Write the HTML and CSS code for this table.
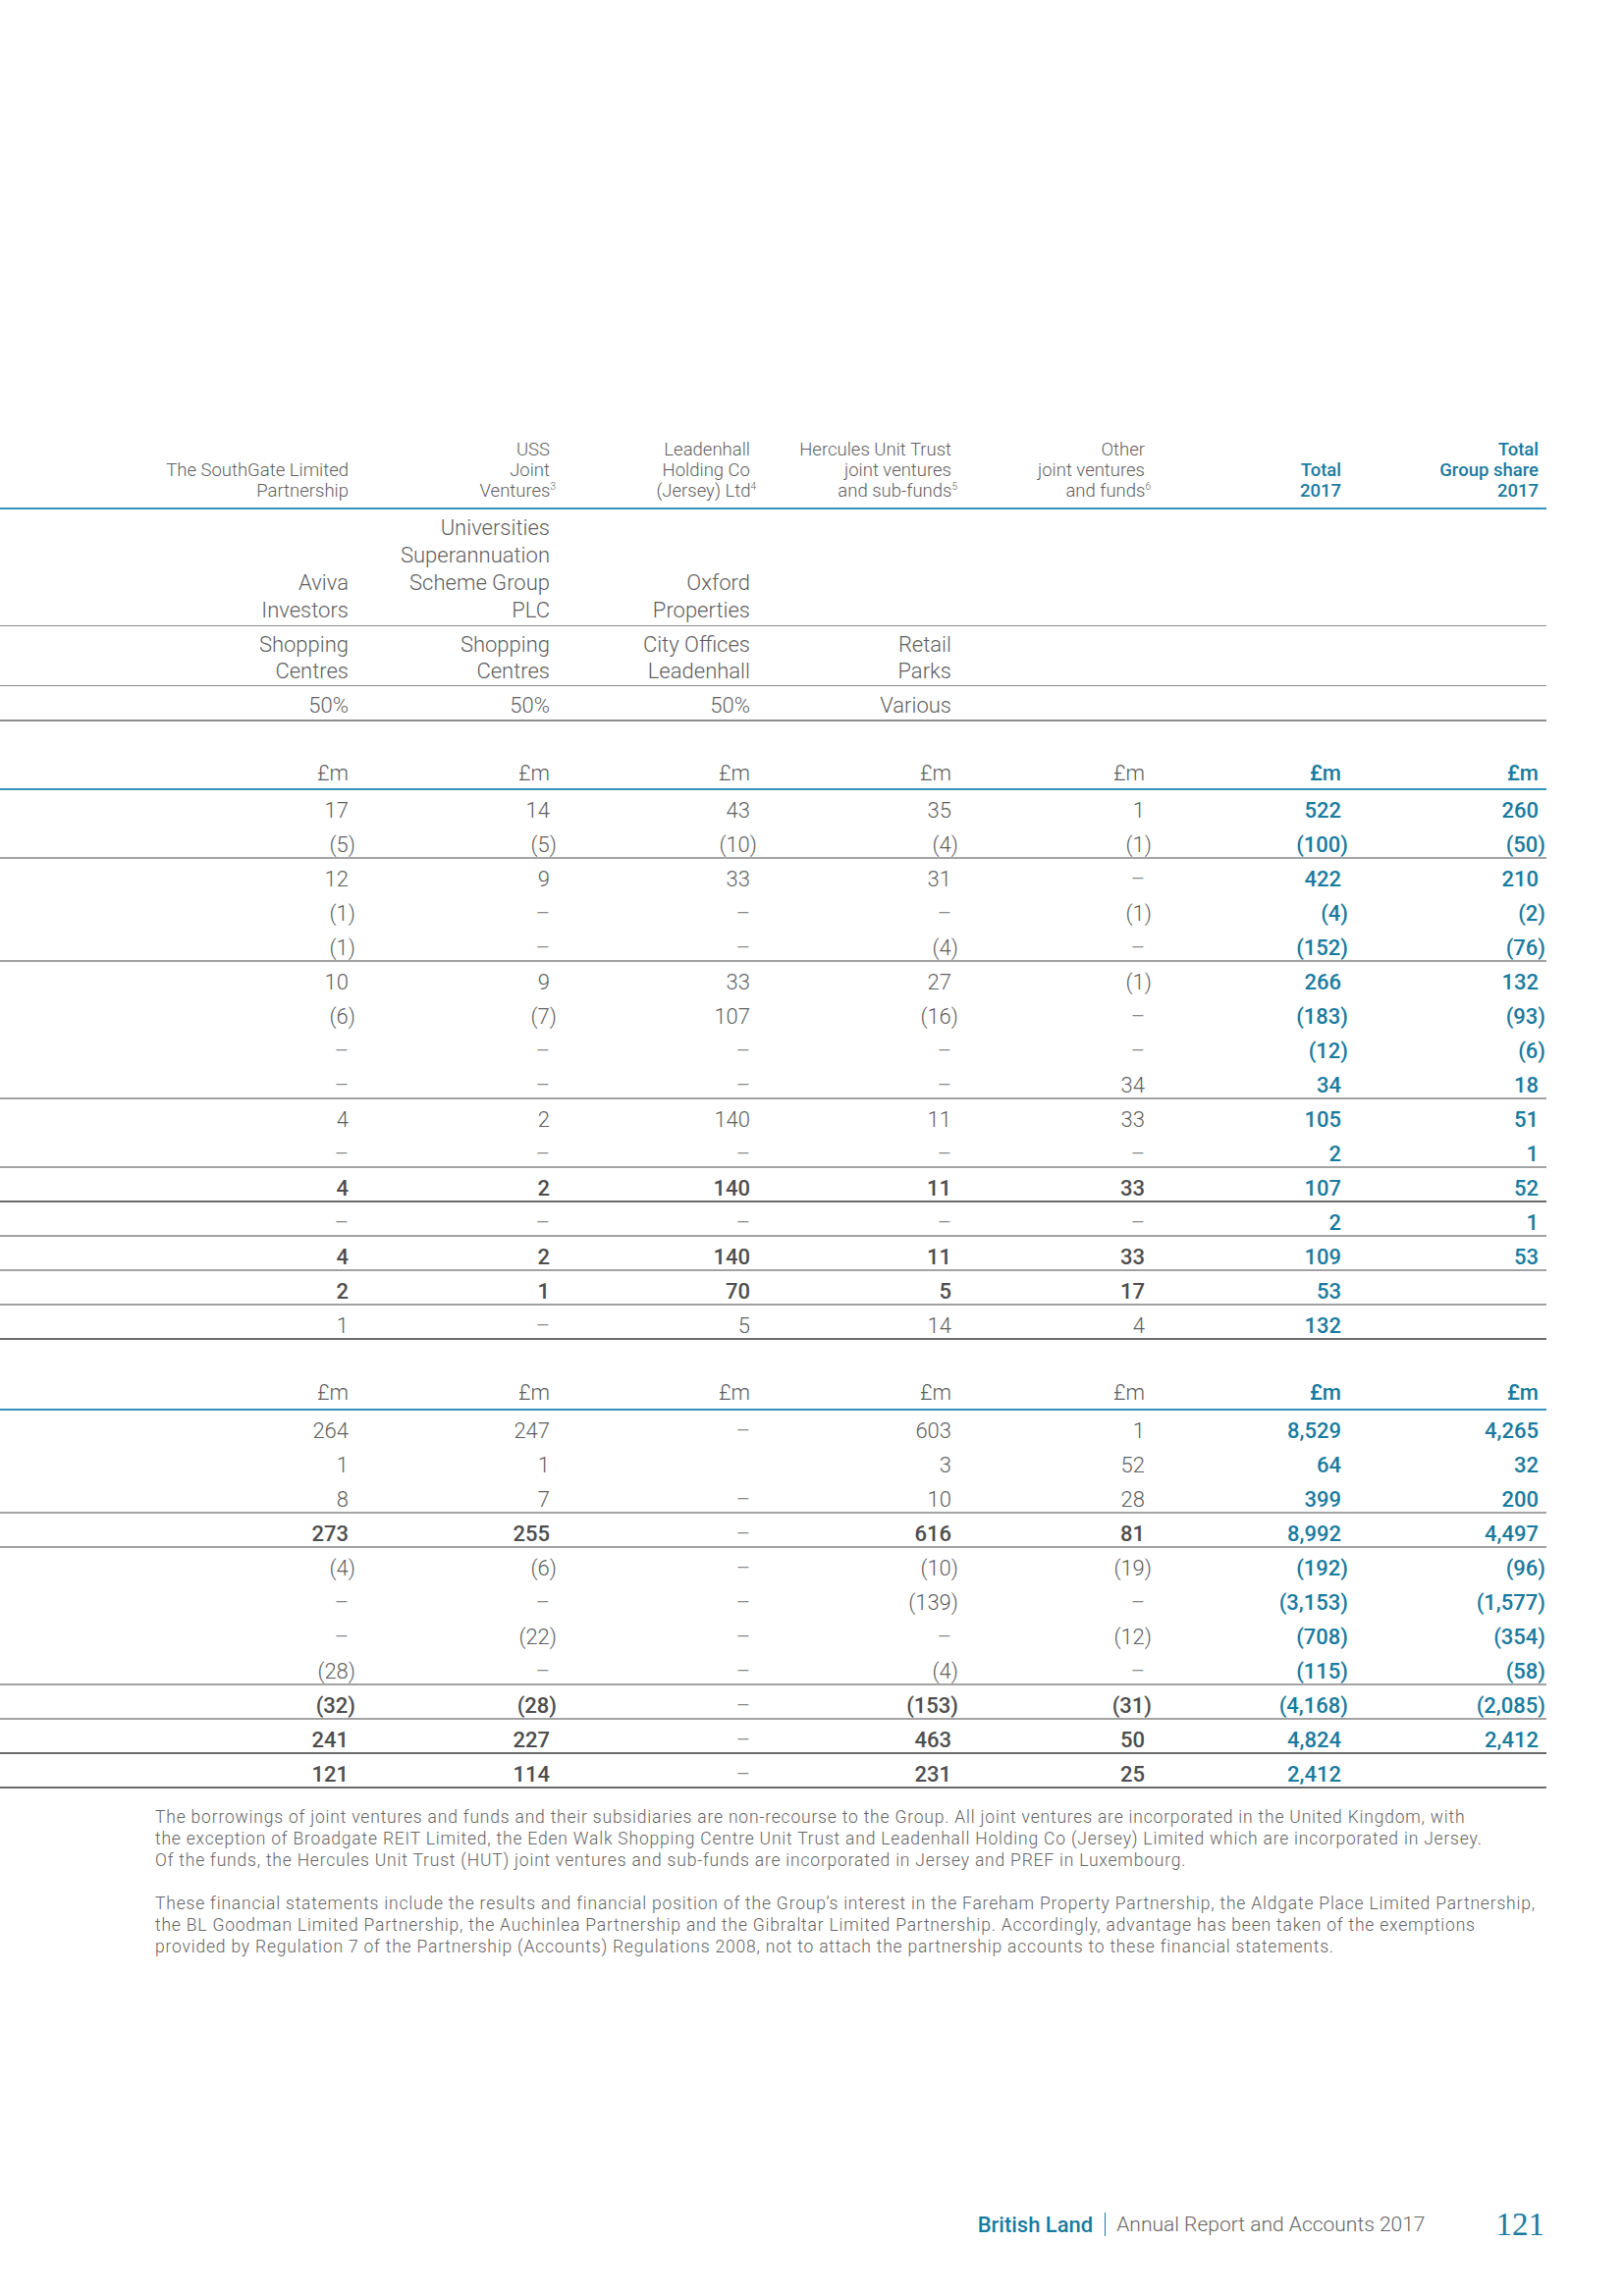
FILE: index.html
```html
<!DOCTYPE html>
<html lang="en">
<head>
<meta charset="utf-8">
<title>British Land – Annual Report and Accounts 2017 – page 121</title>
<link rel="stylesheet" href="styles.css">
</head>
<body>
<div class="page">
  <div class="table">
    <div class="row head">
      <div class="c"></div>
      <div class="c">The SouthGate Limited<br>Partnership</div>
      <div class="c">USS<br>Joint<br>Ventures<span class="sup">3</span></div>
      <div class="c">Leadenhall<br>Holding Co<br>(Jersey) Ltd<span class="sup">4</span></div>
      <div class="c">Hercules Unit Trust<br>joint ventures<br>and sub-funds<span class="sup">5</span></div>
      <div class="c">Other<br>joint ventures<br>and funds<span class="sup">6</span></div>
      <div class="c t">Total<br>2017</div>
      <div class="c t">Total<br>Group share<br>2017</div>
    </div>
    <div class="row partner">
      <div class="c"></div>
      <div class="c">Aviva<br>Investors</div>
      <div class="c">Universities<br>Superannuation<br>Scheme Group<br>PLC</div>
      <div class="c">Oxford<br>Properties</div>
      <div class="c"></div><div class="c"></div><div class="c"></div><div class="c"></div>
    </div>
    <div class="row sector">
      <div class="c"></div>
      <div class="c">Shopping<br>Centres</div>
      <div class="c">Shopping<br>Centres</div>
      <div class="c">City Offices<br>Leadenhall</div>
      <div class="c">Retail<br>Parks</div>
      <div class="c"></div><div class="c"></div><div class="c"></div>
    </div>
    <div class="row pct">
      <div class="c"></div>
      <div class="c">50%</div>
      <div class="c">50%</div>
      <div class="c">50%</div>
      <div class="c">Various</div>
      <div class="c"></div><div class="c"></div><div class="c"></div>
    </div>

    <div class="row unit first">
      <div class="c"></div>
      <div class="c">£m</div><div class="c">£m</div><div class="c">£m</div><div class="c">£m</div><div class="c">£m</div>
      <div class="c t">£m</div><div class="c t">£m</div>
    </div>
    <div class="row"><div class="c"></div><div class="c">17</div><div class="c">14</div><div class="c">43</div><div class="c">35</div><div class="c">1</div><div class="c t">522</div><div class="c t">260</div></div>
    <div class="row b1"><div class="c"></div><div class="c"><span class="ng">(5)</span></div><div class="c"><span class="ng">(5)</span></div><div class="c"><span class="ng">(10)</span></div><div class="c"><span class="ng">(4)</span></div><div class="c"><span class="ng">(1)</span></div><div class="c t"><span class="ng">(100)</span></div><div class="c t"><span class="ng">(50)</span></div></div>
    <div class="row"><div class="c"></div><div class="c">12</div><div class="c">9</div><div class="c">33</div><div class="c">31</div><div class="c d">–</div><div class="c t">422</div><div class="c t">210</div></div>
    <div class="row"><div class="c"></div><div class="c"><span class="ng">(1)</span></div><div class="c d">–</div><div class="c d">–</div><div class="c d">–</div><div class="c"><span class="ng">(1)</span></div><div class="c t"><span class="ng">(4)</span></div><div class="c t"><span class="ng">(2)</span></div></div>
    <div class="row b1"><div class="c"></div><div class="c"><span class="ng">(1)</span></div><div class="c d">–</div><div class="c d">–</div><div class="c"><span class="ng">(4)</span></div><div class="c d">–</div><div class="c t"><span class="ng">(152)</span></div><div class="c t"><span class="ng">(76)</span></div></div>
    <div class="row"><div class="c"></div><div class="c">10</div><div class="c">9</div><div class="c">33</div><div class="c">27</div><div class="c"><span class="ng">(1)</span></div><div class="c t">266</div><div class="c t">132</div></div>
    <div class="row"><div class="c"></div><div class="c"><span class="ng">(6)</span></div><div class="c"><span class="ng">(7)</span></div><div class="c">107</div><div class="c"><span class="ng">(16)</span></div><div class="c d">–</div><div class="c t"><span class="ng">(183)</span></div><div class="c t"><span class="ng">(93)</span></div></div>
    <div class="row"><div class="c"></div><div class="c d">–</div><div class="c d">–</div><div class="c d">–</div><div class="c d">–</div><div class="c d">–</div><div class="c t"><span class="ng">(12)</span></div><div class="c t"><span class="ng">(6)</span></div></div>
    <div class="row b1"><div class="c"></div><div class="c d">–</div><div class="c d">–</div><div class="c d">–</div><div class="c d">–</div><div class="c">34</div><div class="c t">34</div><div class="c t">18</div></div>
    <div class="row"><div class="c"></div><div class="c">4</div><div class="c">2</div><div class="c">140</div><div class="c">11</div><div class="c">33</div><div class="c t">105</div><div class="c t">51</div></div>
    <div class="row b1"><div class="c"></div><div class="c d">–</div><div class="c d">–</div><div class="c d">–</div><div class="c d">–</div><div class="c d">–</div><div class="c t">2</div><div class="c t">1</div></div>
    <div class="row bold b2"><div class="c"></div><div class="c">4</div><div class="c">2</div><div class="c">140</div><div class="c">11</div><div class="c">33</div><div class="c t">107</div><div class="c t">52</div></div>
    <div class="row b1"><div class="c"></div><div class="c d">–</div><div class="c d">–</div><div class="c d">–</div><div class="c d">–</div><div class="c d">–</div><div class="c t">2</div><div class="c t">1</div></div>
    <div class="row bold b1"><div class="c"></div><div class="c">4</div><div class="c">2</div><div class="c">140</div><div class="c">11</div><div class="c">33</div><div class="c t">109</div><div class="c t">53</div></div>
    <div class="row bold b1"><div class="c"></div><div class="c">2</div><div class="c">1</div><div class="c">70</div><div class="c">5</div><div class="c">17</div><div class="c t">53</div><div class="c t"></div></div>
    <div class="row b2"><div class="c"></div><div class="c">1</div><div class="c d">–</div><div class="c">5</div><div class="c">14</div><div class="c">4</div><div class="c t">132</div><div class="c t"></div></div>

    <div class="row unit second">
      <div class="c"></div>
      <div class="c">£m</div><div class="c">£m</div><div class="c">£m</div><div class="c">£m</div><div class="c">£m</div>
      <div class="c t">£m</div><div class="c t">£m</div>
    </div>
    <div class="row"><div class="c"></div><div class="c">264</div><div class="c">247</div><div class="c d">–</div><div class="c">603</div><div class="c">1</div><div class="c t">8,529</div><div class="c t">4,265</div></div>
    <div class="row"><div class="c"></div><div class="c">1</div><div class="c">1</div><div class="c"></div><div class="c">3</div><div class="c">52</div><div class="c t">64</div><div class="c t">32</div></div>
    <div class="row b1"><div class="c"></div><div class="c">8</div><div class="c">7</div><div class="c d">–</div><div class="c">10</div><div class="c">28</div><div class="c t">399</div><div class="c t">200</div></div>
    <div class="row bold b1"><div class="c"></div><div class="c">273</div><div class="c">255</div><div class="c d">–</div><div class="c">616</div><div class="c">81</div><div class="c t">8,992</div><div class="c t">4,497</div></div>
    <div class="row"><div class="c"></div><div class="c"><span class="ng">(4)</span></div><div class="c"><span class="ng">(6)</span></div><div class="c d">–</div><div class="c"><span class="ng">(10)</span></div><div class="c"><span class="ng">(19)</span></div><div class="c t"><span class="ng">(192)</span></div><div class="c t"><span class="ng">(96)</span></div></div>
    <div class="row"><div class="c"></div><div class="c d">–</div><div class="c d">–</div><div class="c d">–</div><div class="c"><span class="ng">(139)</span></div><div class="c d">–</div><div class="c t"><span class="ng">(3,153)</span></div><div class="c t"><span class="ng">(1,577)</span></div></div>
    <div class="row"><div class="c"></div><div class="c d">–</div><div class="c"><span class="ng">(22)</span></div><div class="c d">–</div><div class="c d">–</div><div class="c"><span class="ng">(12)</span></div><div class="c t"><span class="ng">(708)</span></div><div class="c t"><span class="ng">(354)</span></div></div>
    <div class="row b1"><div class="c"></div><div class="c"><span class="ng">(28)</span></div><div class="c d">–</div><div class="c d">–</div><div class="c"><span class="ng">(4)</span></div><div class="c d">–</div><div class="c t"><span class="ng">(115)</span></div><div class="c t"><span class="ng">(58)</span></div></div>
    <div class="row bold b1"><div class="c"></div><div class="c"><span class="ng">(32)</span></div><div class="c"><span class="ng">(28)</span></div><div class="c d">–</div><div class="c"><span class="ng">(153)</span></div><div class="c"><span class="ng">(31)</span></div><div class="c t"><span class="ng">(4,168)</span></div><div class="c t"><span class="ng">(2,085)</span></div></div>
    <div class="row bold b2"><div class="c"></div><div class="c">241</div><div class="c">227</div><div class="c d">–</div><div class="c">463</div><div class="c">50</div><div class="c t">4,824</div><div class="c t">2,412</div></div>
    <div class="row bold b2"><div class="c"></div><div class="c">121</div><div class="c">114</div><div class="c d">–</div><div class="c">231</div><div class="c">25</div><div class="c t">2,412</div><div class="c t"></div></div>
  </div>

  <div class="notes">
    <p>The borrowings of joint ventures and funds and their subsidiaries are non-recourse to the Group. All joint ventures are incorporated in the United Kingdom, with<br>the exception of Broadgate REIT Limited, the Eden Walk Shopping Centre Unit Trust and Leadenhall Holding Co (Jersey) Limited which are incorporated in Jersey.<br>Of the funds, the Hercules Unit Trust (HUT) joint ventures and sub-funds are incorporated in Jersey and PREF in Luxembourg.</p>
    <p>These financial statements include the results and financial position of the Group’s interest in the Fareham Property Partnership, the Aldgate Place Limited Partnership,<br>the BL Goodman Limited Partnership, the Auchinlea Partnership and the Gibraltar Limited Partnership. Accordingly, advantage has been taken of the exemptions<br>provided by Regulation 7 of the Partnership (Accounts) Regulations 2008, not to attach the partnership accounts to these financial statements.</p>
  </div>

  <div class="footer">
    <span class="brand">British Land</span>
    <span class="bar"></span>
    <span class="title">Annual Report and Accounts 2017</span>
    <span class="folio">121</span>
  </div>
</div>
</body>
</html>
```

FILE: styles.css
```css
* { box-sizing: border-box; }

html, body {
  margin: 0;
  padding: 0;
  background: #ffffff;
}

body {
  font-family: Roboto, "Liberation Sans", sans-serif;
  font-weight: 300;
  color: #5f5f5f;
}

.page {
  width: 1654px;
  min-height: 2339px;
  display: flex;
  flex-direction: column;
}

.table {
  width: 1575px;
  margin-top: 448px;
}

.row {
  display: grid;
  grid-template-columns: 160px 203px 205px 204px 205px 197px 200px 201px;
  height: 35px;
  font-size: 22px;
  line-height: 25px;
}

.c {
  text-align: right;
  padding-right: 8px;
  padding-top: 8px;
  white-space: nowrap;
}

.t {
  color: #1a7b9f;
  font-weight: 500;
}

.d {
  color: #8a8a8a;
  font-weight: 300;
}

.bold .c {
  font-weight: 500;
  color: #4e4e4e;
}

.bold .c.t {
  color: #1a7b9f;
}

.bold .c.d {
  color: #8a8a8a;
  font-weight: 300;
}

.ng {
  display: inline-block;
  margin-right: -7px;
}

.b1 { border-bottom: 2px solid #a3a3a3; }
.b2 { border-bottom: 2px solid #6b6b6b; }

/* header block */
.head {
  height: auto;
  font-size: 18.5px;
  line-height: 21px;
  border-bottom: 2px solid #3393bb;
  align-items: end;
}

.head .c {
  padding-top: 0;
  padding-bottom: 6px;
}

.sup {
  font-size: 10px;
  vertical-align: 7px;
  line-height: 0;
  margin-right: -6px;
}

.partner {
  height: auto;
  line-height: 28px;
  align-items: end;
  border-bottom: 1px solid #8d8d8d;
}

.partner .c {
  padding-top: 5px;
  padding-bottom: 1px;
}

.sector {
  height: auto;
  line-height: 27px;
  align-items: end;
  border-bottom: 1px solid #8d8d8d;
}

.sector .c {
  padding-top: 5px;
  padding-bottom: 1px;
}

.pct {
  height: auto;
  line-height: 27px;
  border-bottom: 2px solid #8d8d8d;
}

.pct .c {
  padding-top: 6px;
  padding-bottom: 1px;
}

.unit {
  height: auto;
  border-bottom: 2px solid #3393bb;
}

.unit .c {
  padding-bottom: 3px;
}

.unit.first .c { padding-top: 40px; }
.unit.second .c { padding-top: 41px; padding-bottom: 4px; }

/* notes */
.notes {
  padding-left: 158px;
  margin-top: 18px;
  font-size: 17.5px;
  line-height: 22px;
  color: #656565;
  white-space: nowrap;
  letter-spacing: 0.8px;
}

.notes p {
  margin: 0 0 22px 0;
}

/* footer */
.footer {
  margin-top: auto;
  display: flex;
  align-items: center;
  justify-content: flex-end;
  padding-right: 81px;
  padding-bottom: 53px;
  height: 93px;
}

.brand {
  color: #1a7b9f;
  font-weight: 500;
  font-size: 22px;
}

.bar {
  display: inline-block;
  width: 1px;
  height: 24px;
  background: #1a7b9f;
  margin: 0 11px 0 12px;
}

.title {
  color: #666666;
  font-size: 21px;
  font-weight: 300;
}

.folio {
  font-family: "Liberation Serif", "Times New Roman", serif;
  color: #1a7b9f;
  font-size: 33px;
  margin-left: 72px;
}
```
